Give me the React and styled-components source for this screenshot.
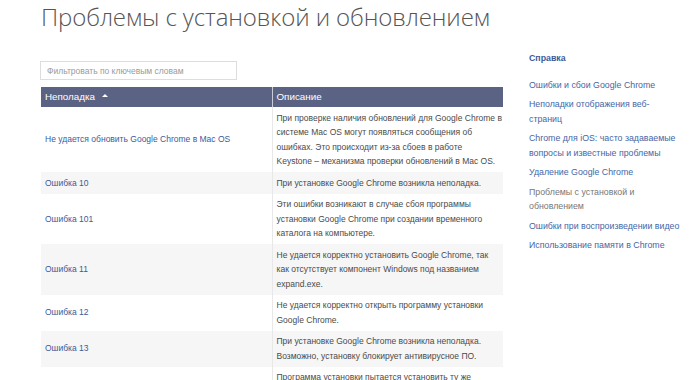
import { Fragment } from "react";
import styled, { createGlobalStyle } from "styled-components";

const GlobalStyle = createGlobalStyle`
  html, body {
    margin: 0;
    padding: 0;
    background: #ffffff;
  }
  body {
    font-family: "Liberation Sans", Arial, sans-serif;
  }
`;

// description text is kept line by line, as it wraps on the page
const rows = [
  {
    issue: "Не удается обновить Google Chrome в Mac OS",
    text: [
      "При проверке наличия обновлений для Google Chrome в",
      "системе Mac OS могут появляться сообщения об",
      "ошибках. Это происходит из-за сбоев в работе",
      "Keystone – механизма проверки обновлений в Mac OS.",
    ],
  },
  { issue: "Ошибка 10", text: ["При установке Google Chrome возникла неполадка."] },
  {
    issue: "Ошибка 101",
    text: [
      "Эти ошибки возникают в случае сбоя программы",
      "установки Google Chrome при создании временного",
      "каталога на компьютере.",
    ],
  },
  {
    issue: "Ошибка 11",
    text: [
      "Не удается корректно установить Google Chrome, так",
      "как отсутствует компонент Windows под названием",
      "expand.exe.",
    ],
  },
  {
    issue: "Ошибка 12",
    text: ["Не удается корректно открыть программу установки", "Google Chrome."],
  },
  {
    issue: "Ошибка 13",
    text: [
      "При установке Google Chrome возникла неполадка.",
      "Возможно, установку блокирует антивирусное ПО.",
    ],
  },
  {
    issue: "Ошибка 14",
    text: [
      "Программа установки пытается установить ту же",
      "версию Google Chrome, которая уже установлена на",
      "компьютере.",
    ],
  },
];

const links = [
  { label: "Ошибки и сбои Google Chrome" },
  { label: "Неполадки отображения веб-страниц" },
  { label: "Chrome для iOS: часто задаваемые вопросы и известные проблемы" },
  { label: "Удаление Google Chrome" },
  { label: "Проблемы с установкой и обновлением", current: true },
  { label: "Ошибки при воспроизведении видео" },
  { label: "Использование памяти в Chrome" },
];

export default function App() {
  return (
    <>
      <GlobalStyle />
      <Page>
        <Title>Проблемы с установкой и обновлением</Title>
        <Columns>
          <Main>
            <Filter placeholder="Фильтровать по ключевым словам" />
            <Table>
              <thead>
                <tr>
                  <HeadCell>
                    Неполадка <SortArrow />
                  </HeadCell>
                  <HeadCell>Описание</HeadCell>
                </tr>
              </thead>
              <tbody>
                {rows.map((r, i) => (
                  <Row key={r.issue} $alt={i % 2 === 1}>
                    <IssueCell>
                      <IssueLink href="#">{r.issue}</IssueLink>
                    </IssueCell>
                    <TextCell>
                      {r.text.map((line, j) => (
                        <Fragment key={j}>
                          {j > 0 && <br />}
                          {line}
                        </Fragment>
                      ))}
                    </TextCell>
                  </Row>
                ))}
              </tbody>
            </Table>
          </Main>
          <Sidebar>
            <SideTitle>Справка</SideTitle>
            <SideList>
              {links.map((l) => (
                <SideItem key={l.label} $current={l.current}>
                  {l.label}
                </SideItem>
              ))}
            </SideList>
          </Sidebar>
        </Columns>
      </Page>
    </>
  );
}

const Page = styled.div`
  padding-left: 41px;
  height: 380px;
  overflow: hidden;
`;

const Title = styled.h1`
  margin: 0;
  font-family: "Open Sans", sans-serif;
  font-weight: 300;
  font-size: 24px;
  letter-spacing: -0.1px;
  line-height: 34px;
  color: #555555;
  white-space: nowrap;
`;

const Columns = styled.div`
  display: flex;
  align-items: flex-start;
  margin-top: 17px;
`;

const Main = styled.div`
  width: 462px;
  padding-top: 10px;
`;

const Filter = styled.input`
  display: block;
  box-sizing: border-box;
  width: 197px;
  height: 19px;
  margin-left: -1px;
  border: 1px solid #dddddd;
  padding: 0 6px;
  font-family: "Liberation Sans", Arial, sans-serif;
  font-size: 8.5px;
  color: #444;
  outline: none;

  &::placeholder {
    color: #9a9a9a;
  }
`;

const Table = styled.table`
  width: 462px;
  margin-top: 7px;
  border-collapse: collapse;
  table-layout: fixed;
  font-size: 8.5px;
  line-height: 14.5px;
`;

const HeadCell = styled.th`
  height: 20px;
  padding: 0 4px;
  background: #5b6384;
  color: #ffffff;
  font-weight: normal;
  font-size: 9.8px;
  text-align: left;
  vertical-align: middle;

  & + & {
    border-left: 1px solid #c9cbd6;
  }
`;

const SortArrow = styled.span`
  display: inline-block;
  width: 0;
  height: 0;
  margin-left: 4px;
  vertical-align: 3px;
  border-left: 3px solid transparent;
  border-right: 3px solid transparent;
  border-bottom: 3px solid #ffffff;
`;

const Row = styled.tr`
  background: ${(p) => (p.$alt ? "#f6f6f6" : "#ffffff")};
`;

const IssueCell = styled.td`
  padding: 3.5px 4px;
  vertical-align: middle;
`;

const IssueLink = styled.a`
  color: #3d5a98;
  text-decoration: none;
`;

const TextCell = styled.td`
  padding: 3.5px 2px 3.5px 4px;
  color: #4a4a4a;
  vertical-align: middle;
  white-space: nowrap;
  border-left: 1px solid #e8e8e8;
`;

const Sidebar = styled.aside`
  width: 153px;
  margin-left: 26px;
  font-size: 8.8px;
  line-height: 14.5px;
`;

const SideTitle = styled.div`
  color: #3d5a98;
  font-weight: bold;
`;

const SideList = styled.ul`
  list-style: none;
  margin: 12px 0 0;
  padding: 0;
`;

const SideItem = styled.li`
  margin-bottom: 5px;
  color: ${(p) => (p.$current ? "#777777" : "#4566a6")};
`;
